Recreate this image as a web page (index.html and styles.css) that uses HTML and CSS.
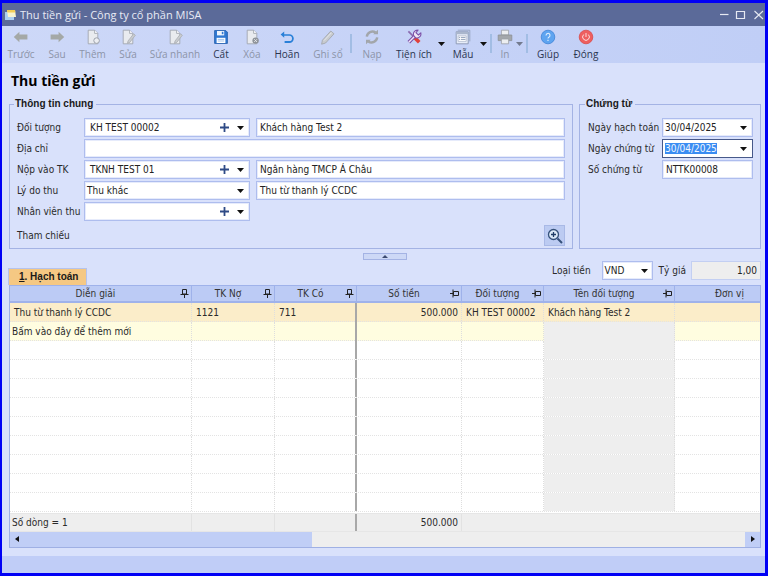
FILE: index.html
```html
<!DOCTYPE html>
<html lang="vi">
<head>
    <meta charset="UTF-8">
    <title>Thu tiền gửi</title>
    <link rel="stylesheet" href="styles.css">
</head>
<body>
    <svg class="icon-defs" width="0" height="0">
        <symbol id="doc" viewBox="0 0 20 20">
            <path d="M4 1.500h8l4 4v13H4z" fill="#e9ebef" stroke="#9a9fa8"/>
            <path d="M12 1.500v4h4" fill="#fff" stroke="#9a9fa8"/>
        </symbol>
        <symbol id="pencil" viewBox="0 0 20 20">
            <path d="M10 15l7-9 2.200 1.800-7 9-3 1.200z" fill="#c9ccd0" stroke="#a2a5aa" stroke-width=".8"/>
        </symbol>
        <symbol id="arrow-down" viewBox="0 0 7 4">
            <path d="M0 0h7L3.500 4z" fill="#111"/>
        </symbol>
        <symbol id="plus" viewBox="0 0 9 9">
            <path d="M4.500 0v9M0 4.500h9" stroke="#2e4a86" stroke-width="1.800" fill="none"/>
        </symbol>
        <symbol id="pin" viewBox="0 0 9 9">
            <path d="M2.500 .5h4v4.500h-4zM0.500 5.500h8M4.500 5.500V9" stroke="#222" fill="none"/>
        </symbol>
        <symbol id="pin-side" viewBox="0 0 9 9">
            <path d="M3.500 2.500h5v4h-5zM3 .5v8M3 4.500H0" stroke="#222" fill="none"/>
        </symbol>
    </svg>

    <div class="window">
        <div class="title-bar">
            <svg class="title-icon" width="12" height="12" viewBox="0 0 12 12">
                <path d="M0 3h9v8H0z" fill="#a9cdf2"/>
                <path d="M2 1h8l1 7H3z" fill="#f8f3cf"/>
                <path d="M2 1h8l.3 2.500H2.400z" fill="#f3cd58"/>
            </svg>
            <span class="title-text">Thu tiền gửi - Công ty cổ phần MISA</span>
            <div class="window-controls">
                <svg width="44" height="10" viewBox="0 0 44 10">
                    <path d="M0 4.500h8.500" stroke="#e6e9f2" stroke-width="1.200"/>
                    <path d="M16.500 1.500h8v7h-8z" stroke="#e6e9f2" stroke-width="1.200" fill="none"/>
                    <path d="M34.500 1l8.500 8M43 1l-8.500 8" stroke="#e6e9f2" stroke-width="1.100"/>
                </svg>
            </div>
        </div>

        <div class="toolbar">
            <div class="tool off">
                <svg viewBox="0 0 20 20"><path d="M1 10l7-6.500V7h10v6H8v3.500z" fill="#a4a8a6"/></svg>
                <span>Trước</span>
            </div>
            <div class="tool off">
                <svg viewBox="0 0 20 20"><path d="M19 10l-7-6.500V7H2v6h10v3.500z" fill="#a4a8a6"/></svg>
                <span>Sau</span>
            </div>
            <div class="tool off">
                <svg viewBox="0 0 20 20">
                    <use href="#doc"/>
                    <circle cx="14.500" cy="14.500" r="3.500" fill="#eceef2" stroke="#9a9fa8" stroke-width="1.200"/>
                </svg>
                <span>Thêm</span>
            </div>
            <div class="tool off">
                <svg viewBox="0 0 20 20"><use href="#doc"/><use href="#pencil"/></svg>
                <span>Sửa</span>
            </div>
            <div class="tool off">
                <svg viewBox="0 0 20 20"><use href="#doc"/><use href="#pencil"/></svg>
                <span>Sửa nhanh</span>
            </div>
            <div class="tool">
                <svg viewBox="0 0 20 20">
                    <path d="M2 2h14l2 2v14H2z" fill="#2f78d2" stroke="#1e5aa8"/>
                    <path d="M5 2.500h9v5.500H5z" fill="#eef4fc"/>
                    <path d="M11 3.500h2v3h-2z" fill="#2f78d2"/>
                    <path d="M4.500 11h11v6.500h-11z" fill="#fff"/>
                    <path d="M6 13h8M6 15h8" stroke="#8fb6e6"/>
                </svg>
                <span>Cất</span>
            </div>
            <div class="tool off">
                <svg viewBox="0 0 20 20">
                    <use href="#doc"/>
                    <circle cx="14.500" cy="14.500" r="4" fill="#8f949b"/>
                    <path d="M12.800 12.800l3.400 3.400M16.200 12.800l-3.400 3.400" stroke="#e8e9ec" stroke-width="1.200"/>
                </svg>
                <span>Xóa</span>
            </div>
            <div class="tool">
                <svg viewBox="0 0 20 20">
                    <path d="M6.500 3L2 7l4.500 4V8.500H13a3 3 0 0 1 0 6.500H7v2.500h6a5.500 5.500 0 0 0 0-11H6.500z" fill="#2a80d8"/>
                </svg>
                <span>Hoãn</span>
            </div>
            <div class="tool off">
                <svg viewBox="0 0 20 20">
                    <path d="M3 14L13.500 2.500 17.500 6 7 17.500l-5 1.500z" fill="#c8cbcf" stroke="#a0a3a8"/>
                    <path d="M5 14.500L14.500 4.500" stroke="#eef0f2"/>
                </svg>
                <span>Ghi sổ</span>
            </div>
            <div class="tool-sep"></div>
            <div class="tool off">
                <svg viewBox="0 0 20 20">
                    <path d="M14.500 4.500A7 7 0 0 0 3.500 9.500M5.500 15.500A7 7 0 0 0 16.500 10.500" fill="none" stroke="#a2a6aa" stroke-width="3"/>
                    <path d="M11.500 6.500h6V1zM8.500 13.500h-6V19z" fill="#a2a6aa"/>
                </svg>
                <span>Nạp</span>
            </div>
            <div class="tool">
                <svg viewBox="0 0 20 20">
                    <path d="M3 3l7 7" stroke="#8a6aae" stroke-width="2.200"/>
                    <path d="M10 10l6.500 6.500" stroke="#e0403a" stroke-width="4.500"/>
                    <path d="M3.500 16.500l8-8" stroke="#7a4fa8" stroke-width="4.500"/>
                    <path d="M3.500 16.500l8-8" stroke="#efe6f6" stroke-width="1.800"/>
                    <path d="M9.500 8A5 5 0 0 1 15 1.500l-2.500 3 3 3 3-2.500A5 5 0 0 1 12 11z" fill="#efe6f6" stroke="#7a4fa8" stroke-width="1.300"/>
                </svg>
                <span>Tiện ích</span>
            </div>
            <svg class="tool-drop" width="7" height="4"><use href="#arrow-down"/></svg>
            <div class="tool">
                <svg viewBox="0 0 20 20">
                    <path d="M3.500 1.500h15v14" fill="none" stroke="#8e9cb6"/>
                    <path d="M1.500 3.500h15v15h-15z" fill="#e6ecf8" stroke="#7f8da8"/>
                    <path d="M1.500 3.500h15v3h-15z" fill="#aab6cc"/>
                    <path d="M4 8.500h10v7H4z" fill="#fff" stroke="#9aa6bc" stroke-width=".7"/>
                    <path d="M5 10.500h1.500M7.500 10.500h5.500M5 13h1.500M7.500 13h5.500" stroke="#7488a8"/>
                </svg>
                <span>Mẫu</span>
            </div>
            <svg class="tool-drop" width="7" height="4"><use href="#arrow-down"/></svg>
            <div class="tool-sep"></div>
            <div class="tool off">
                <svg viewBox="0 0 20 20">
                    <path d="M5.500 1.500h9v6h-9z" fill="#eceef0" stroke="#9a9ea4"/>
                    <path d="M1.500 7.500h17v7h-17z" fill="#a3a7ab" stroke="#8c9096"/>
                    <path d="M5.500 12.500h9v6h-9z" fill="#eceef0" stroke="#9a9ea4"/>
                </svg>
                <span>In</span>
            </div>
            <svg class="tool-drop faded" width="7" height="4"><use href="#arrow-down"/></svg>
            <div class="tool-sep"></div>
            <div class="tool">
                <svg viewBox="0 0 20 20">
                    <circle cx="10" cy="10" r="8.500" fill="#5ea4f0" stroke="#3f83d6"/>
                    <path d="M7.500 8a2.500 2.500 0 1 1 3.600 2.200c-.8.500-1.100.9-1.100 1.800" fill="none" stroke="#e8f2fd" stroke-width="1.300"/>
                    <path d="M9.300 13.500h1.400v1.500H9.300z" fill="#e8f2fd"/>
                </svg>
                <span>Giúp</span>
            </div>
            <div class="tool">
                <svg viewBox="0 0 20 20">
                    <circle cx="10" cy="10" r="8.500" fill="#ee5f5f" stroke="#d94a4a"/>
                    <path d="M7 7a4.200 4.200 0 1 0 6 0" fill="none" stroke="#fbe3e3" stroke-width="1.200"/>
                    <path d="M10 5v5" stroke="#fbe3e3" stroke-width="1.200"/>
                </svg>
                <span>Đóng</span>
            </div>
        </div>

        <div class="main">
            <h1 class="page-title">Thu tiền gửi</h1>

            <div class="form-row">
                <fieldset class="group group-general">
                    <legend>Thông tin chung</legend>
                    <div class="general-fields">
                        <label>Đối tượng</label>
                        <div class="input combo with-plus">
                            <span class="value indent">KH TEST 00002</span>
                            <svg class="add" width="9" height="9"><use href="#plus"/></svg>
                            <svg class="drop" width="7" height="4"><use href="#arrow-down"/></svg>
                        </div>
                        <div class="input side"><span class="value">Khách hàng Test 2</span></div>

                        <label>Địa chỉ</label>
                        <div class="input span-two"></div>

                        <label>Nộp vào TK</label>
                        <div class="input combo with-plus">
                            <span class="value indent">TKNH TEST 01</span>
                            <svg class="add" width="9" height="9"><use href="#plus"/></svg>
                            <svg class="drop" width="7" height="4"><use href="#arrow-down"/></svg>
                        </div>
                        <div class="input side"><span class="value">Ngân hàng TMCP Á Châu</span></div>

                        <label>Lý do thu</label>
                        <div class="input combo">
                            <span class="value tight">Thu khác</span>
                            <svg class="drop" width="7" height="4"><use href="#arrow-down"/></svg>
                        </div>
                        <div class="input side"><span class="value">Thu từ thanh lý CCDC</span></div>

                        <label>Nhân viên thu</label>
                        <div class="input combo with-plus">
                            <span class="value"></span>
                            <svg class="add" width="9" height="9"><use href="#plus"/></svg>
                            <svg class="drop" width="7" height="4"><use href="#arrow-down"/></svg>
                        </div>
                    </div>
                    <div class="reference-row">
                        <label>Tham chiếu</label>
                        <button class="zoom-button" type="button">
                            <svg width="16" height="16" viewBox="0 0 16 16">
                                <circle cx="6.500" cy="6.500" r="5" fill="#dceaf8" stroke="#35517a" stroke-width="1.300"/>
                                <path d="M4 6.500h5M6.500 4v5" stroke="#1f3c66" stroke-width="1.300"/>
                                <path d="M10.500 10.500l4.500 4.500" stroke="#35517a" stroke-width="2"/>
                            </svg>
                        </button>
                    </div>
                </fieldset>

                <fieldset class="group group-voucher">
                    <legend>Chứng từ</legend>
                    <div class="voucher-fields">
                        <label>Ngày hạch toán</label>
                        <div class="input combo">
                            <span class="value date">30/04/2025</span>
                            <svg class="drop" width="7" height="4"><use href="#arrow-down"/></svg>
                        </div>
                        <label>Ngày chứng từ</label>
                        <div class="input combo focused">
                            <span class="value date"><span class="selected">30/04/2025</span></span>
                            <svg class="drop" width="7" height="4"><use href="#arrow-down"/></svg>
                        </div>
                        <label>Số chứng từ</label>
                        <div class="input"><span class="value">NTTK00008</span></div>
                    </div>
                </fieldset>
            </div>

            <div class="collapser"><span class="collapser-arrow"></span></div>

            <div class="tab-row">
                <div class="tab"><u>1</u>. Hạch toán</div>
                <div class="currency">
                    <label>Loại tiền</label>
                    <div class="input combo currency-select">
                        <span class="value tight">VND</span>
                        <svg class="drop" width="7" height="4"><use href="#arrow-down"/></svg>
                    </div>
                    <label>Tỷ giá</label>
                    <div class="input rate"><span class="value">1,00</span></div>
                </div>
            </div>

            <div class="data-grid">
                <div class="grid-row grid-head">
                    <div>Diễn giải<svg class="pin" width="9" height="9"><use href="#pin"/></svg></div>
                    <div>TK Nợ<svg class="pin" width="9" height="9"><use href="#pin"/></svg></div>
                    <div>TK Có<svg class="pin" width="9" height="9"><use href="#pin"/></svg></div>
                    <div>Số tiền<svg class="pin" width="9" height="9"><use href="#pin-side"/></svg></div>
                    <div>Đối tượng<svg class="pin" width="9" height="9"><use href="#pin-side"/></svg></div>
                    <div>Tên đối tượng<svg class="pin" width="9" height="9"><use href="#pin-side"/></svg></div>
                    <div>Đơn vị</div>
                </div>
                <div class="grid-row grid-line current">
                    <div>Thu từ thanh lý CCDC</div>
                    <div>1121</div>
                    <div class="frozen">711</div>
                    <div class="num">500.000</div>
                    <div>KH TEST 00002</div>
                    <div>Khách hàng Test 2</div>
                    <div></div>
                </div>
                <div class="grid-row grid-line new-row">
                    <div class="add-hint">Bấm vào đây để thêm mới</div>
                    <div></div><div class="frozen"></div><div></div><div></div><div class="locked"></div><div></div>
                </div>
                <div class="grid-line-list" id="empty-rows"></div>
                <div class="grid-row grid-foot">
                    <div class="add-hint">Số dòng = 1</div>
                    <div></div>
                    <div class="frozen"></div>
                    <div class="num">500.000</div>
                    <div></div><div></div><div></div>
                </div>
                <div class="h-scroll">
                    <div class="scroll-thumb"><span class="arrow-left"></span></div>
                    <div class="scroll-right"><span class="arrow-right"></span></div>
                </div>
            </div>
        </div>

        <div class="status-bar"></div>
    </div>

    <script>
        // hàng trống của lưới
        var list = document.getElementById('empty-rows');
        for (var i = 0; i < 9; i++) {
            var row = document.createElement('div');
            row.className = 'grid-row grid-line';
            row.innerHTML = '<div></div><div></div><div class="frozen"></div><div></div><div></div><div class="locked"></div><div></div>';
            list.appendChild(row);
        }
    </script>
</body>
</html>
```

FILE: styles.css
```css
* {
    margin: 0;
    padding: 0;
    box-sizing: border-box;
}

html, body {
    height: 100%;
}

body {
    background: #0000f5;
    padding: 3px 3px 3px 2px;
    font-family: "DejaVu Sans Condensed", "DejaVu Sans", sans-serif;
    font-stretch: condensed;
    font-size: 10px;
    color: #2a2a2a;
    overflow: hidden;
}

label {
    white-space: nowrap;
}

.icon-defs {
    position: absolute;
}

.window {
    height: 570px;
    display: flex;
    flex-direction: column;
    background: #d9e1fb;
}

.title-bar {
    height: 23px;
    flex: none;
    display: flex;
    align-items: center;
    background: #5b6a99;
    padding: 0 1px 0 3px;
}

.title-icon {
    margin-right: 3px;
}

.title-text {
    font-family: "Open Sans", sans-serif;
    font-stretch: normal;
    font-size: 11px;
    color: #e8ebf5;
}

.window-controls {
    margin-left: auto;
    display: flex;
    align-items: center;
}

.toolbar {
    height: 37px;
    flex: none;
    display: grid;
    grid-template-columns: 36px 36px 35px 36px 58px 34px 28px 42px 40px 6px 36px 48px 8px 34px 8px 6px 22px 8px 6px 36px 40px;
    grid-auto-rows: 37px;
    padding-left: 1px;
    background: linear-gradient(90deg, #cdd8f8, #c0cef6);
}

.tool {
    display: flex;
    flex-direction: column;
    align-items: center;
    padding-top: 3px;
    font-family: "Open Sans", sans-serif;
    font-stretch: normal;
    font-size: 10px;
    line-height: 14px;
    color: #2b3550;
    white-space: nowrap;
}

.tool svg {
    width: 16px;
    height: 16px;
    margin-bottom: 2px;
}

.tool.off {
    color: #8c94a8;
}

.tool-sep {
    width: 2px;
    height: 19px;
    margin: 8px 0 0 2px;
    background: #a2bde4;
}

.tool-drop {
    margin-top: 16px;
}

.tool-drop.faded {
    opacity: 0.45;
}

.main {
    flex: 1;
    min-height: 0;
    padding: 0 4px 0 7px;
}

.page-title {
    height: 34px;
    display: flex;
    align-items: center;
    padding: 1px 0 0 2px;
    font-family: "Open Sans", sans-serif;
    font-stretch: normal;
    font-size: 14px;
    font-weight: 700;
    color: #000;
}

.form-row {
    display: flex;
    gap: 6px;
}

.group {
    height: 152px;
    border: 1px solid #a4b3e4;
    min-width: 0;
}

.group legend {
    margin-left: -3px;
    padding: 0 3px 0 1px;
    font-family: "Liberation Sans", sans-serif;
    font-stretch: normal;
    line-height: 14px;
    font-weight: 700;
    color: #1a1a1a;
}

.group-general {
    width: 564px;
    padding: 7px 7px 0 7px;
}

.group-voucher {
    width: 182px;
    padding: 7px 7px 0 8px;
}

.general-fields {
    display: grid;
    grid-template-columns: 67px 166px 315px;
    grid-auto-rows: 19px;
    row-gap: 2px;
    align-items: center;
}

.general-fields .side {
    margin-left: 6px;
}

.general-fields .span-two {
    grid-column: span 2;
}

.voucher-fields {
    display: grid;
    grid-template-columns: 74px 91px;
    grid-auto-rows: 19px;
    row-gap: 2px;
    align-items: center;
}

.input {
    height: 19px;
    display: flex;
    align-items: center;
    position: relative;
    background: #fff;
    border: 1px solid #aebdee;
    box-shadow: inset 0 0 0 1px #e6ebfb;
    line-height: 15px;
    color: #222;
}

.value {
    padding-left: 3px;
    white-space: nowrap;
}

.value.indent {
    padding-left: 5px;
}

.value.tight,
.value.date {
    padding-left: 2px;
}

.add {
    position: absolute;
    right: 20px;
    top: 4px;
}

.drop {
    position: absolute;
    right: 5px;
    top: 7px;
}

.input.focused {
    border-color: #47598a;
    box-shadow: none;
}

.selected {
    background: #3a8df2;
    color: #f2f7ff;
}

.reference-row {
    display: flex;
    align-items: center;
    justify-content: space-between;
    margin-top: 4px;
    height: 21px;
}

.zoom-button {
    width: 21px;
    height: 21px;
    display: flex;
    align-items: center;
    justify-content: center;
    background: #bccbf2;
    border: 1px solid #a9b9e6;
}

.collapser {
    width: 44px;
    height: 7px;
    margin: 4px 0 0 354px;
    border: 1px solid #a4b3e4;
    background: #cdd8f6;
    display: flex;
    align-items: center;
    justify-content: center;
}

.collapser-arrow {
    border-left: 3px solid transparent;
    border-right: 3px solid transparent;
    border-bottom: 3px solid #3c4a70;
}

.tab-row {
    height: 25px;
    display: flex;
    align-items: flex-end;
    justify-content: space-between;
}

.tab {
    width: 79px;
    height: 17px;
    margin-left: -1px;
    padding-left: 10px;
    font-family: "Liberation Sans", sans-serif;
    font-stretch: normal;
    line-height: 16px;
    background: #f5c883;
    border: 1px solid #b6c3ec;
    border-bottom: none;
    font-weight: 700;
    color: #1a1a1a;
}

.currency {
    align-self: flex-start;
    margin-top: 1px;
    display: flex;
    align-items: center;
}

.currency label {
    margin-right: 5px;
}

.currency label:first-child {
    margin-right: 11px;
}

.currency-select {
    width: 51px;
    margin-right: 6px;
}

.currency-select .drop {
    right: 4px;
}

.currency .rate {
    width: 70px;
    justify-content: flex-end;
    background: #eeeeee;
    box-shadow: none;
    padding-right: 3px;
    border-color: #c3cff2;
}

.data-grid {
    height: 263px;
    border: 1px solid #9fb0e4;
    border-top: none;
    overflow: hidden;
    background: #fff;
}

.grid-row {
    width: 785px;
    display: grid;
    grid-template-columns: 182px 83px 82px 105px 82px 131px 120px;
}

.grid-head {
    height: 18px;
    background: #bccbf5;
    border-top: 1px solid #9fb2ea;
    border-bottom: 2px solid #9fb2ea;
}

.grid-head > div {
    position: relative;
    padding-right: 10px;
    text-align: center;
    line-height: 15px;
    color: #333;
    border-right: 1px solid #9fb2ea;
}

.pin {
    position: absolute;
    right: 2px;
    top: 3px;
}

.grid-line {
    height: 19px;
    border-bottom: 1px dotted #e3e3e3;
}

.grid-line > div {
    line-height: 20px;
    padding-left: 4px;
    border-right: 1px dotted #dedede;
    white-space: nowrap;
}

.current {
    background: #fbedc9;
}

.new-row {
    background: #fffde0;
}

.grid-line > div.add-hint,
.grid-foot > div.add-hint {
    padding-left: 2px;
}

.grid-line > div.num,
.grid-foot > div.num {
    padding: 0 3px 0 0;
    text-align: right;
}

.locked {
    background: #eeeeee;
}

.grid-line > div.frozen,
.grid-foot > div.frozen {
    border-right: 2px solid #a8a8a8;
}

.grid-foot {
    height: 19px;
    margin-top: 1px;
    background: #eeeeee;
    border-top: 1px solid #e6e6e6;
    border-bottom: 1px solid #e6e6e6;
}

.grid-foot > div {
    line-height: 17px;
    border-right: 1px solid #e2e2e2;
    white-space: nowrap;
}

.grid-foot > div:nth-child(n+5) {
    border-right: none;
}

.h-scroll {
    height: 15px;
    display: flex;
    justify-content: space-between;
    background: #eeeeee;
}

.scroll-thumb {
    width: 302px;
    background: #c0cef6;
    padding: 4px 0 0 5px;
}

.scroll-right {
    width: 15px;
    background: #c0cef6;
    padding: 4px 0 0 6px;
}

.arrow-left,
.arrow-right {
    display: block;
    width: 0;
    border-top: 3.500px solid transparent;
    border-bottom: 3.500px solid transparent;
}

.arrow-left {
    border-right: 4px solid #111;
}

.arrow-right {
    border-left: 4px solid #111;
}

.status-bar {
    height: 17px;
    flex: none;
    background: #c0cdf7;
}
```
